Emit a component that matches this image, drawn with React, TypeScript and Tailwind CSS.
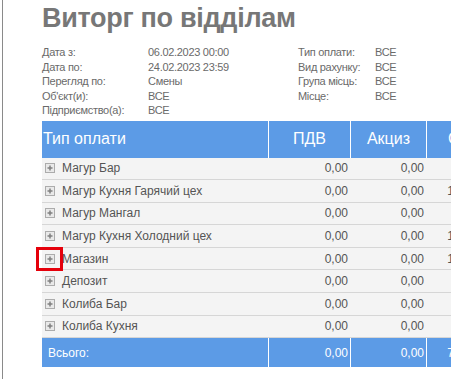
import React from "react";

type Row = {
  name: string;
  vat: string;
  excise: string;
  total: string;
  marked?: boolean;
};

const filters: [string, string, string, string][] = [
  ["Дата з:", "06.02.2023 00:00", "Тип оплати:", "ВСЕ"],
  ["Дата по:", "24.02.2023 23:59", "Вид рахунку:", "ВСЕ"],
  ["Перегляд по:", "Смены", "Група місць:", "ВСЕ"],
  ["Об'єкт(и):", "ВСЕ", "Місце:", "ВСЕ"],
  ["Підприємство(а):", "ВСЕ", "", ""],
];

const rows: Row[] = [
  { name: "Магур Бар", vat: "0,00", excise: "0,00", total: "850,00" },
  { name: "Магур Кухня Гарячий цех", vat: "0,00", excise: "0,00", total: "1 420,00" },
  { name: "Магур Мангал", vat: "0,00", excise: "0,00", total: "760,00" },
  { name: "Магур Кухня Холодний цех", vat: "0,00", excise: "0,00", total: "1 135,00" },
  { name: "Магазин", vat: "0,00", excise: "0,00", total: "1 280,00", marked: true },
  { name: "Депозит", vat: "0,00", excise: "0,00", total: "500,00" },
  { name: "Колиба Бар", vat: "0,00", excise: "0,00", total: "640,00" },
  { name: "Колиба Кухня", vat: "0,00", excise: "0,00", total: "720,00" },
];

const cols = "grid grid-cols-[226px_82px_76px_70px]";

function ExpandIcon() {
  return (
    <span className="flex h-[10px] w-[10px] shrink-0 items-center justify-center border border-[#acacac] bg-[#e9e9e9]">
      <svg width="8" height="8" viewBox="0 0 8 8">
        <path d="M4 1.5v5M1.5 4h5" stroke="#808080" strokeWidth="1.5" />
      </svg>
    </span>
  );
}

export default function App() {
  return (
    <div
      className="h-[379px] w-[451px] overflow-hidden bg-white"
      style={{ fontFamily: '"Liberation Sans", Arial, sans-serif' }}
    >
      <div className="ml-[2px] h-full border-l border-[#8a8a8a] pl-[39px]">
        <h1 className="pt-[5px] text-[27px] font-bold leading-[27px] tracking-[-0.3px] whitespace-nowrap text-[#777777]">
          Виторг по відділам
        </h1>

        <div className="mt-[13px] grid grid-cols-[106px_150px_77px_80px] text-[11px] leading-[14.5px] tracking-[-0.3px] text-[#6a6a6a]">
          {filters.map((f, i) => (
            <React.Fragment key={i}>
              <span>{f[0]}</span>
              <span>{f[1]}</span>
              <span>{f[2]}</span>
              <span>{f[3]}</span>
            </React.Fragment>
          ))}
        </div>

        <div className="mt-[3px] w-[454px] text-[12px]">
          <div className={`${cols} h-[37px] bg-[#5c9be6] text-[16px] text-white`}>
            <div className="flex items-center pl-[1px]">Тип оплати</div>
            <div className="flex items-center justify-center border-l border-white">ПДВ</div>
            <div className="flex items-center justify-center border-l border-white">Акциз</div>
            <div className="flex items-center border-l border-white pl-[21px]">Сума</div>
          </div>

          {rows.map((r) => (
            <div
              key={r.name}
              className={`${cols} h-[22.6px] border-b border-[#d6d6d6] bg-[#f4f4f4] text-[#555555]`}
            >
              <div className="relative flex items-center pl-[3px]">
                <ExpandIcon />
                <span className="ml-[7px] whitespace-nowrap">{r.name}</span>
                {r.marked && (
                  <span className="absolute left-[-6px] top-[-1px] h-[24px] w-[27px] border-[3px] border-[#e5000b]" />
                )}
              </div>
              <div className="flex items-center justify-end pr-[2px]">{r.vat}</div>
              <div className="flex items-center justify-end pr-[2px]">{r.excise}</div>
              <div className="flex items-center justify-end whitespace-nowrap pr-[2px]">{r.total}</div>
            </div>
          ))}

          <div className={`${cols} h-[29px] bg-[#5c9be6] text-white`}>
            <div className="flex items-center pl-[6px]">Всього:</div>
            <div className="flex items-center justify-end border-l border-white pr-[2px]">0,00</div>
            <div className="flex items-center justify-end border-l border-white pr-[2px]">0,00</div>
            <div className="flex items-center justify-end whitespace-nowrap border-l border-white pr-[2px]">7 305,00</div>
          </div>
        </div>
      </div>
    </div>
  );
}
